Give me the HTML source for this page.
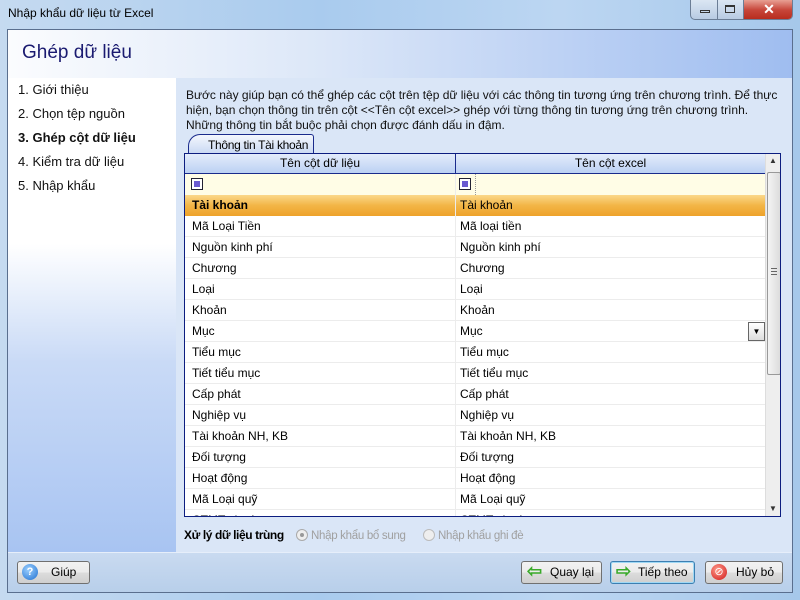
<!DOCTYPE html>
<html><head><meta charset="utf-8"><style>
*{box-sizing:border-box;margin:0;padding:0}
body{width:800px;height:600px;overflow:hidden;font-family:"Liberation Sans",sans-serif;font-size:12px;color:#000;position:relative;background:linear-gradient(90deg,#c5daf0,#a9cbee 40%,#bcd6f2 70%,#a6c8ea);}
.abs{position:absolute}
.title{left:8px;top:6px;font-size:12px;color:#000}
.client{left:7px;top:29px;width:786px;height:564px;border:1px solid #5a6f8e;background:#d9e5f6;}
.hdr{left:0;top:0;width:784px;height:48px;background:linear-gradient(90deg,#fbfcfe,#dce7f8 40%,#9fbdf0);}
.hdr span{position:absolute;left:14px;top:12px;font-size:19px;color:#1a1a70}
.left{left:0;top:48px;width:168px;height:474px;background:linear-gradient(#fff 0,#fff 35%,#c9daf6 60%,#a8c4f2);}
.left div{position:absolute;left:10px;font-size:13px;color:#111}
.right{left:168px;top:48px;width:616px;height:474px;background:#dae6f7}
.desc{left:10px;top:10px;width:600px;font-size:12px;line-height:15px;color:#111}
.bottom{left:0;top:522px;width:784px;height:40px;background:linear-gradient(#c9daf0,#b8cfea);border-top:1px solid #e6eefa}
.btn{position:absolute;top:8px;height:23px;border:1px solid #707070;border-radius:3px;background:linear-gradient(#f2f2f2,#ebebeb 50%,#dcdcdc 51%,#cfcfcf);font-size:12px;line-height:21px}
.grid{left:184px;top:153px;width:597px;height:364px;border:1px solid #0c1d80;background:#fff;overflow:hidden}
.row{position:absolute;left:0;width:580px;height:21px;border-bottom:1px solid #ececec;font-size:12px;line-height:20px}
.row span{position:absolute;left:7px}
.row span+span{left:275px}
.tab{left:188px;top:134px;width:126px;height:20px;border:1px solid #1a2b8c;border-bottom:none;border-radius:12px 3px 0 0;background:linear-gradient(#f4f7fd,#c8d8f3);font-size:12px;line-height:20px;padding-left:19px;white-space:nowrap;letter-spacing:-0.3px}
.rl{color:#a0a0a0;font-size:11.5px;letter-spacing:-0.3px;line-height:14px}
</style></head><body>
<div class="abs title">Nhập khẩu dữ liệu từ Excel</div>
<div class="abs" style="left:690px;top:0;width:103px;height:20px;border:1px solid #6b7d96;border-top:none;border-radius:0 0 5px 5px;overflow:hidden;background:linear-gradient(#dbe6f3,#b8cbe3)">
 <div class="abs" style="left:26px;top:0;width:1px;height:20px;background:#6b7d96"></div>
 <div class="abs" style="left:52px;top:0;width:1px;height:20px;background:#6b7d96"></div>
 <div class="abs" style="left:9px;top:10px;width:10px;height:3px;border:1px solid #333"></div>
 <div class="abs" style="left:34px;top:5px;width:10px;height:8px;border:1px solid #333;border-top-width:2px"></div>
 <div class="abs" style="left:53px;top:0;width:50px;height:20px;background:linear-gradient(#e8a093,#c7463a 50%,#b62a1b);color:#fff;font-weight:bold;font-size:14px;text-align:center;line-height:19px">✕</div>
</div>
<div class="abs client">
 <div class="abs hdr"><span>Ghép dữ liệu</span></div>
 <div class="abs left">
  <div style="top:4px">1. Giới thiệu</div>
  <div style="top:28px">2. Chọn tệp nguồn</div>
  <div style="top:52px;font-weight:bold">3. Ghép cột dữ liệu</div>
  <div style="top:76px">4. Kiểm tra dữ liệu</div>
  <div style="top:100px">5. Nhập khẩu</div>
 </div>
 <div class="abs right">
  <div class="abs desc">Bước này giúp bạn có thể ghép các cột trên tệp dữ liệu với các thông tin tương ứng trên chương trình. Để thực hiện, bạn chọn thông tin trên cột &lt;&lt;Tên cột excel&gt;&gt; ghép với từng thông tin tương ứng trên chương trình. Những thông tin bắt buộc phải chọn được đánh dấu in đậm.</div>
  <div class="abs" style="left:8px;top:450px;font-weight:bold;font-size:12px;letter-spacing:-0.4px">Xử lý dữ liệu trùng</div>
  <div class="abs" style="left:120px;top:451px;width:12px;height:12px;border:1px solid #aaa;border-radius:50%;background:#eee"><div class="abs" style="left:3px;top:3px;width:4px;height:4px;border-radius:50%;background:#999"></div></div>
  <div class="abs rl" style="left:135px;top:451px">Nhập khẩu bổ sung</div>
  <div class="abs" style="left:247px;top:451px;width:12px;height:12px;border:1px solid #bbb;border-radius:50%;background:#eee"></div>
  <div class="abs rl" style="left:262px;top:451px">Nhập khẩu ghi đè</div>
 </div>
 <div class="abs bottom">
  <div class="btn" style="left:9px;width:73px"><span style="position:absolute;left:4px;top:2px;width:16px;height:16px;border-radius:50%;background:radial-gradient(circle at 40% 35%,#9cd0ff,#1f6fd0);color:#fff;font-weight:bold;font-size:11px;text-align:center;line-height:16px">?</span><span style="position:absolute;left:33px">Giúp</span></div>
  <div class="btn" style="left:513px;width:81px"><span style="position:absolute;left:5px;top:-1px;color:#3aaa2a;font-size:18px;font-weight:bold">⇦</span><span style="position:absolute;left:28px">Quay lại</span></div>
  <div class="btn" style="left:602px;width:85px;border-color:#3c7fb1;box-shadow:inset 0 0 0 1px #9fd8f5"><span style="position:absolute;left:5px;top:-1px;color:#3aaa2a;font-size:18px;font-weight:bold">⇨</span><span style="position:absolute;left:27px">Tiếp theo</span></div>
  <div class="btn" style="left:697px;width:78px"><span style="position:absolute;left:5px;top:2px;width:16px;height:16px;border-radius:50%;background:radial-gradient(circle at 40% 35%,#ff9a8a,#d01818);color:#fff;font-size:11px;text-align:center;line-height:16px">⊘</span><span style="position:absolute;left:30px">Hủy bỏ</span></div>
 </div>
</div>
<div class="abs tab">Thông tin Tài khoản</div>
<div class="abs grid">
 <div class="abs" style="left:0;top:0;width:580px;height:20px;background:linear-gradient(#e3ecfb,#bcd1f3);border-bottom:1px solid #1a2b8c;line-height:19px">
  <span class="abs" style="left:0;width:270px;text-align:center">Tên cột dữ liệu</span>
  <div class="abs" style="left:270px;top:0;width:1px;height:20px;background:#1a2b8c"></div>
  <span class="abs" style="left:271px;width:309px;text-align:center">Tên cột excel</span>
 </div>
 <div class="abs" style="left:0;top:20px;width:580px;height:21px;background:#fffde6">
  <div class="abs" style="left:6px;top:4px;width:12px;height:12px;border:1px solid #223;background:#fff"><div class="abs" style="left:2px;top:2px;width:6px;height:6px;background:#6a5ad0"></div></div>
  <div class="abs" style="left:274px;top:4px;width:12px;height:12px;border:1px solid #223;background:#fff"><div class="abs" style="left:2px;top:2px;width:6px;height:6px;background:#6a5ad0"></div></div>
  <div class="abs" style="left:290px;top:0;width:0;height:21px;border-left:1px dotted #999"></div>
 </div>
 <div class="row" style="top:41px;background:linear-gradient(#fbd88a,#f2b546 50%,#eea22a);font-weight:bold;border:none"><span>Tài khoản</span><span style="font-weight:normal">Tài khoản</span></div>
 <div class="row" style="top:62px"><span>Mã Loại Tiền</span><span>Mã loại tiền</span></div>
 <div class="row" style="top:83px"><span>Nguồn kinh phí</span><span>Nguồn kinh phí</span></div>
 <div class="row" style="top:104px"><span>Chương</span><span>Chương</span></div>
 <div class="row" style="top:125px"><span>Loại</span><span>Loại</span></div>
 <div class="row" style="top:146px"><span>Khoản</span><span>Khoản</span></div>
 <div class="row" style="top:167px"><span>Mục</span><span>Mục</span><div class="abs" style="left:563px;top:1px;width:17px;height:19px;border:1px solid #666;background:linear-gradient(#fff,#ddd);font-size:8px;text-align:center;line-height:17px">▼</div></div>
 <div class="row" style="top:188px"><span>Tiểu mục</span><span>Tiểu mục</span></div>
 <div class="row" style="top:209px"><span>Tiết tiểu mục</span><span>Tiết tiểu mục</span></div>
 <div class="row" style="top:230px"><span>Cấp phát</span><span>Cấp phát</span></div>
 <div class="row" style="top:251px"><span>Nghiệp vụ</span><span>Nghiệp vụ</span></div>
 <div class="row" style="top:272px"><span>Tài khoản NH, KB</span><span>Tài khoản NH, KB</span></div>
 <div class="row" style="top:293px"><span>Đối tượng</span><span>Đối tượng</span></div>
 <div class="row" style="top:314px"><span>Hoạt động</span><span>Hoạt động</span></div>
 <div class="row" style="top:335px"><span>Mã Loại quỹ</span><span>Mã Loại quỹ</span></div>
 <div class="row" style="top:356px"><span>CTMT, dự án</span><span>CTMT, dự án</span></div>
 <div class="abs" style="left:270px;top:20px;width:1px;height:344px;background:#ececec"></div>
 <div class="abs" style="left:580px;top:0;width:16px;height:362px;background:#eeeeee;border-left:1px solid #ddd">
  <div class="abs" style="left:3px;top:2px;font-size:8px;color:#333">▲</div>
  <div class="abs" style="left:3px;top:350px;font-size:8px;color:#333">▼</div>
  <div class="abs" style="left:1px;top:18px;width:14px;height:203px;border:1px solid #999;border-radius:2px;background:linear-gradient(90deg,#f4f4f4,#dcdcdc)"><div class="abs" style="left:3px;top:95px;width:6px;height:7px;border-top:1px solid #666;border-bottom:1px solid #666"><div style="margin-top:2px;border-top:1px solid #666"></div></div></div>
 </div>
</div>
</body></html>
